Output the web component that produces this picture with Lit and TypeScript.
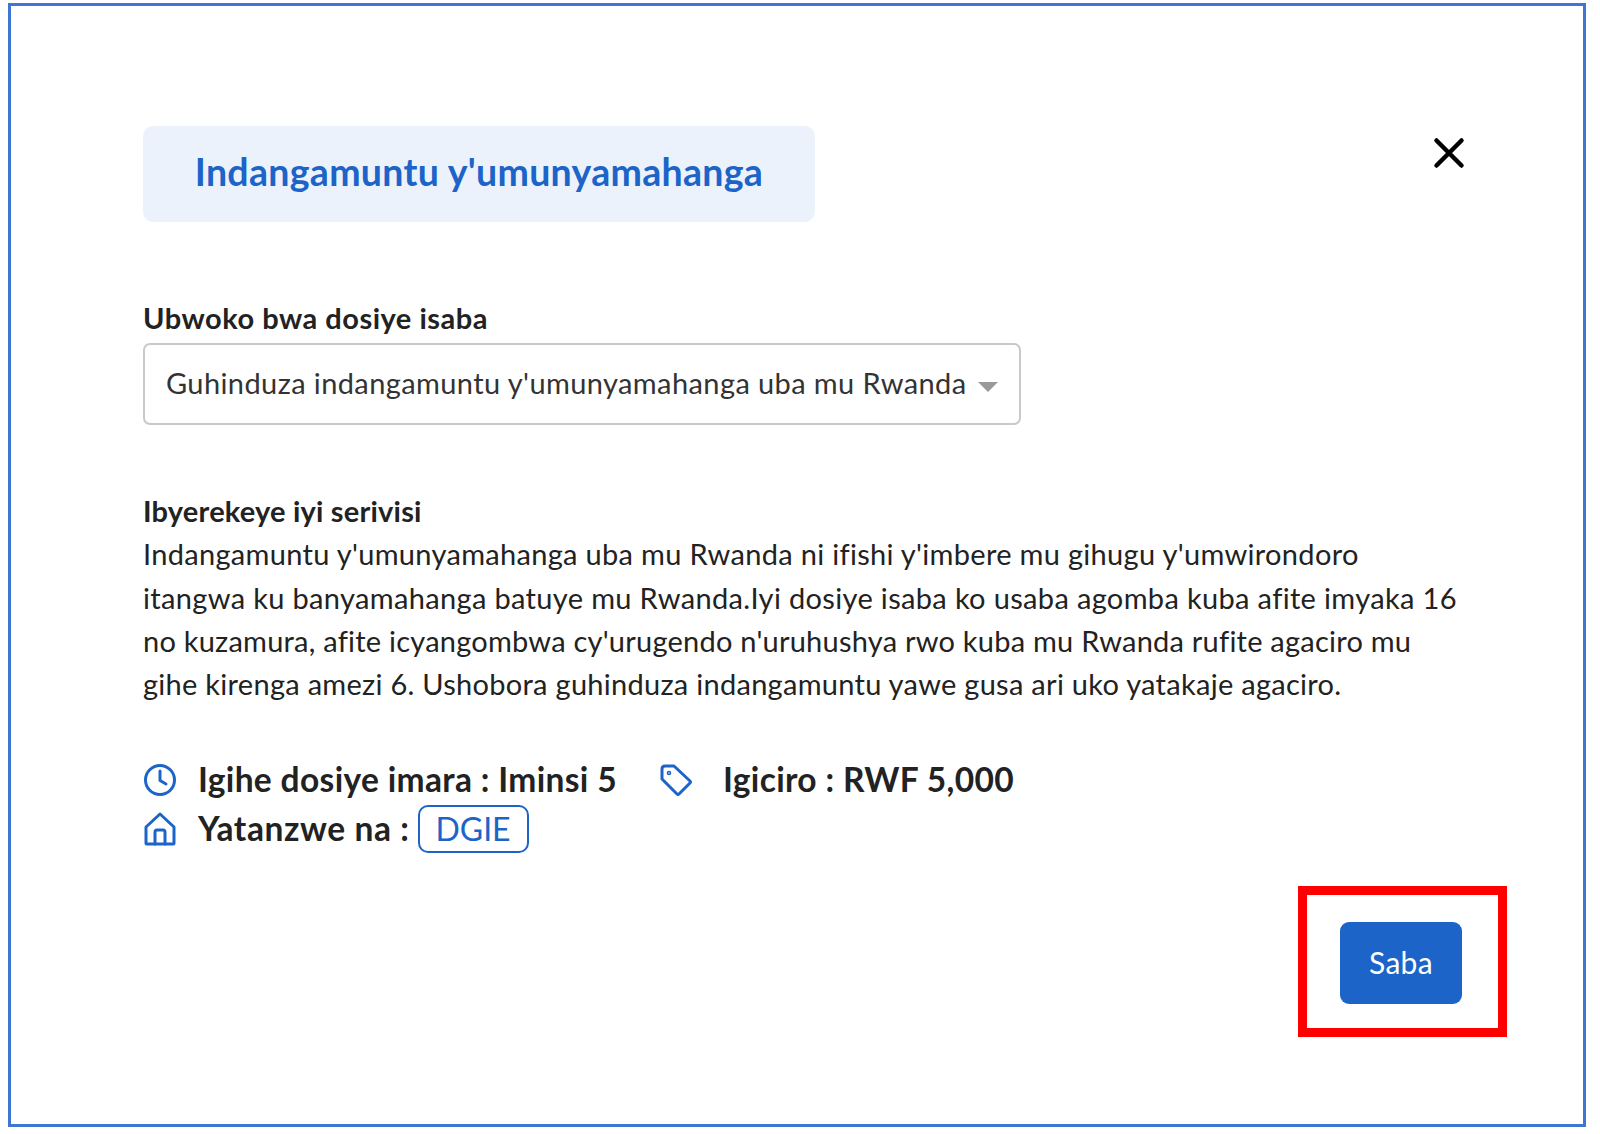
import { LitElement, html, css } from "lit";
import { customElement } from "lit/decorators.js";

@customElement("app-root")
export class AppRoot extends LitElement {
  static styles = css`
    :host { display: block; width: 1600px; height: 1134px; background: #fff; font-family: "Lato", "Noto Sans", sans-serif; color: #222; box-sizing: border-box; padding: 3px 14px 7px 8px; }
    .panel { box-sizing: border-box; height: 100%; border: 3px solid #3f75d3; padding: 120px 73px 0 132px; display: flex; flex-direction: column; }
    .top { display: flex; justify-content: space-between; align-items: flex-start; }
    .title { box-sizing: border-box; width: 672px; height: 96px; padding-bottom: 5px; background: #ecf2fb; border-radius: 10px; display: flex; align-items: center; justify-content: center; color: #1c64c8; font-size: 37.5px; letter-spacing: 0.3px; font-weight: 700; }
    .close { display: block; margin: 10px 44px 0 0; }
    .label { margin-top: 78px; font-size: 29px; letter-spacing: 0.5px; font-weight: 700; line-height: 36px; color: #222; }
    .select { box-sizing: border-box; margin-top: 7px; width: 878px; height: 82px; border: 2px solid #c9c9c9; border-radius: 7px; padding: 0 21px 4px; display: flex; align-items: center; justify-content: space-between; font-size: 29px; letter-spacing: 0.4px; color: #333; }
    .caret { width: 0; height: 0; border-left: 10.5px solid transparent; border-right: 10.5px solid transparent; border-top: 10.5px solid #999; margin-top: 9px; }
    .about { margin-top: 64px; font-size: 29px; letter-spacing: 0.31px; line-height: 43.3px; color: #222; }
    .about h3 { margin: 0; font: inherit; font-weight: 700; letter-spacing: 0.2px; }
    .about p { margin: 0; }
    .about span { display: block; white-space: nowrap; }
    .about .l2 { letter-spacing: 0.34px; }
    .about .l3 { letter-spacing: 0.23px; }
    .about .l4 { letter-spacing: 0.28px; }
    .facts { margin-top: 49px; font-size: 33.5px; letter-spacing: 0.35px; font-weight: 700; color: #222; display: flex; flex-direction: column; }
    .row { display: flex; align-items: center; height: 49px; }
    .ic { display: block; flex: none; color: #1c64c8; margin-top: 2px; }
    .t1 { margin-left: 21px; }
    .t2 { margin-left: 42px; }
    .t3 { margin-left: 30px; }
    .t4 { margin-left: 21px; letter-spacing: 0.6px; }
    .badge { margin: 2px 0 0 8px; box-sizing: border-box; height: 48px; width: 111px; border: 2px solid #1c64c8; border-radius: 10px; color: #1c64c8; font-weight: 400; font-size: 32px; letter-spacing: 0; display: flex; align-items: center; justify-content: center; }
    .actions { display: flex; justify-content: flex-end; margin: 34px 3px 0 0; }
    .mark { border: 9px solid #f00; padding: 27px 36px 24px 33px; display: flex; }
    .mark button { width: 122px; height: 82px; border: 0; border-radius: 9px; background: #1c64c8; color: #fff; font: inherit; font-size: 30px; letter-spacing: 0.3px; padding: 0 0 3px; }
  `;

  render() {
    return html`
      <div class="panel">
        <div class="top">
          <div class="title">Indangamuntu y'umunyamahanga</div>
          <svg class="close" width="34" height="34" viewBox="0 0 34 34" fill="none" stroke="#000" stroke-width="4.5" stroke-linecap="round"><path d="M4.5 4.5 L29.5 29.5 M29.5 4.5 L4.5 29.5"/></svg>
        </div>
        <div class="label">Ubwoko bwa dosiye isaba</div>
        <div class="select">Guhinduza indangamuntu y'umunyamahanga uba mu Rwanda<i class="caret"></i></div>
        <div class="about">
          <h3>Ibyerekeye iyi serivisi</h3>
          <p>
            <span>Indangamuntu y'umunyamahanga uba mu Rwanda ni ifishi y'imbere mu gihugu y'umwirondoro</span>
            <span class="l2">itangwa ku banyamahanga batuye mu Rwanda.Iyi dosiye isaba ko usaba agomba kuba afite imyaka 16</span>
            <span class="l3">no kuzamura, afite icyangombwa cy'urugendo n'uruhushya rwo kuba mu Rwanda rufite agaciro mu</span>
            <span class="l4">gihe kirenga amezi 6. Ushobora guhinduza indangamuntu yawe gusa ari uko yatakaje agaciro.</span>
          </p>
        </div>
        <div class="facts">
          <div class="row">
            <svg class="ic" width="34" height="34" viewBox="0 0 34 34" fill="none" stroke="currentColor" stroke-width="3" stroke-linecap="round" stroke-linejoin="round"><circle cx="17" cy="17" r="14.5"/><path d="M17 8 V17.5 L23 21"/></svg>
            <span class="t1">Igihe dosiye imara : Iminsi 5</span>
            <svg class="ic t2" width="34" height="34" viewBox="0 0 34 34" fill="none" stroke="currentColor" stroke-width="3" stroke-linecap="round" stroke-linejoin="round"><path d="M3 6 Q3 3 6 3 H15 L31 18 Q32 19 31 20 L20 31 Q19 32 18 31 L3 16 Z"/><circle cx="10" cy="10" r="0.8"/></svg>
            <span class="t3">Igiciro : RWF 5,000</span>
          </div>
          <div class="row">
            <svg class="ic" width="34" height="34" viewBox="0 0 34 34" fill="none" stroke="currentColor" stroke-width="3" stroke-linecap="round" stroke-linejoin="round"><path d="M3 15 L17 2 L31 15 V31 Q31 32 30 32 H4 Q3 32 3 31 Z"/><path d="M12 32 V20 Q12 18 14 18 H20 Q22 18 22 20 V32"/></svg>
            <span class="t4">Yatanzwe na :</span>
            <span class="badge">DGIE</span>
          </div>
        </div>
        <div class="actions">
          <div class="mark"><button>Saba</button></div>
        </div>
      </div>
    `;
  }
}
